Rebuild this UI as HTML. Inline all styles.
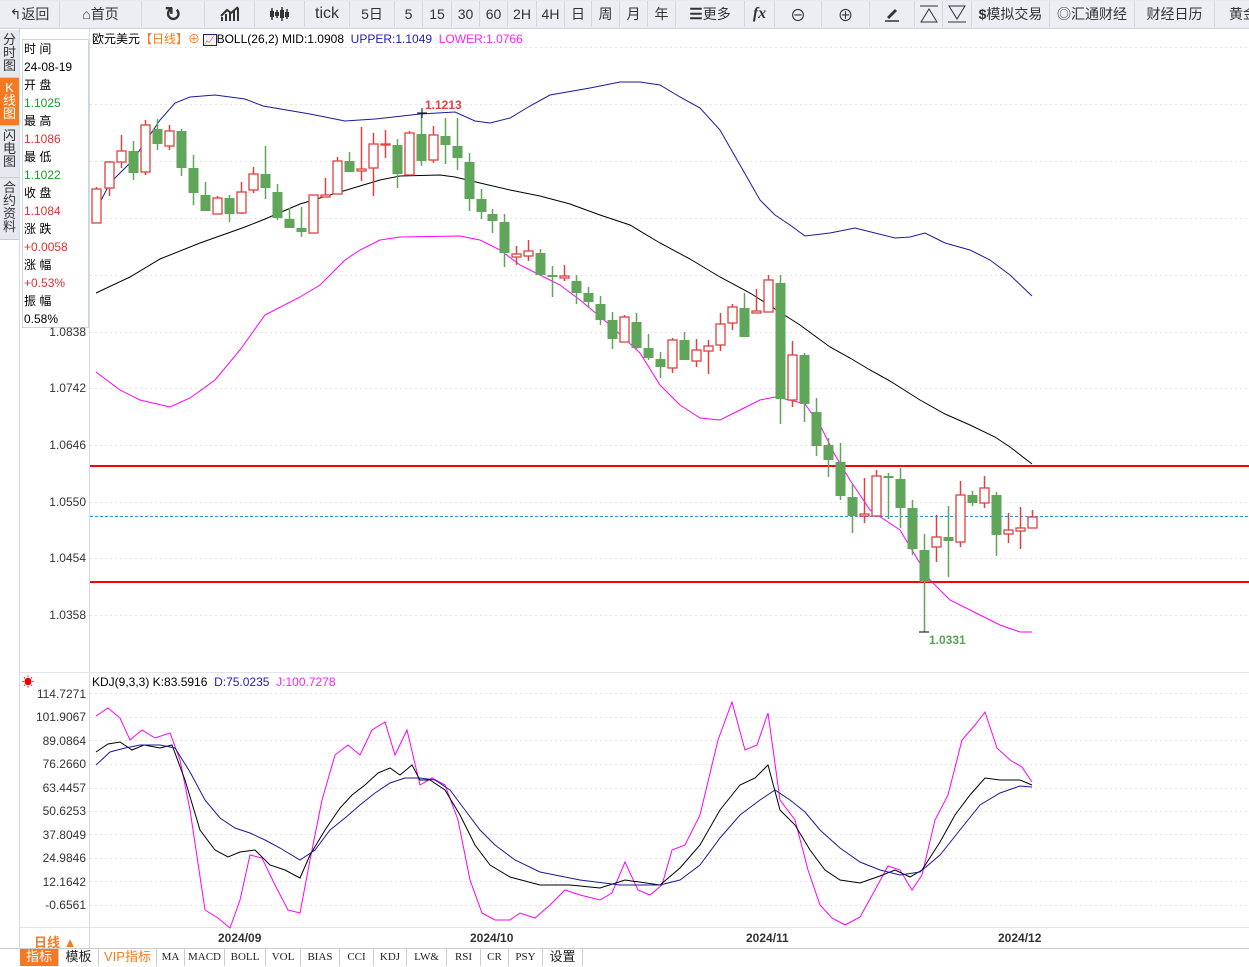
<!DOCTYPE html>
<html><head><meta charset="utf-8">
<style>
*{margin:0;padding:0;box-sizing:border-box}
body{width:1249px;height:967px;overflow:hidden;background:#fff;font-family:"Liberation Sans","Noto Sans CJK SC",sans-serif;position:relative}
#tb{position:absolute;left:0;top:0;width:1249px;height:29px;background:#e6e9f0;border-bottom:1px solid #d0d4dc}
.b{position:absolute;top:1px;height:26px;border-right:1px solid #d4d7de;background:#eceef4;font-size:14px;color:#333;display:flex;align-items:center;justify-content:center;white-space:nowrap}
#tabs{position:absolute;left:0;top:30px;width:19px;height:210px}
.t{width:19px;background:#e6e9f0;color:#333;font-size:13px;line-height:13px;text-align:center;padding-top:3px;border-bottom:1px solid #ccc}
#info{position:absolute;left:22px;top:39px;width:67px;height:289px;border:1px solid #cfd3da;background:#fff;font-size:12px;line-height:18px;padding-left:1px}
.g{color:#1a9a2a}.r{color:#e03030}
.yl{position:absolute;font-size:12px;color:#333;text-align:right;width:66px;left:20px}
#bot{position:absolute;left:0;top:948px;height:17px;font-size:12px;border-top:1px solid #ccc;width:1249px}
#bot div{position:absolute;top:0;height:17px;border-right:1px solid #ccc;text-align:center;line-height:16px;font-family:"Liberation Serif","Noto Serif CJK SC",serif;font-size:11px;color:#222}
#bot div.c{font-family:"Liberation Sans","Noto Sans CJK SC",sans-serif;font-size:13px}
</style></head><body>
<div id="tb">
<div class="b" style="left:0;width:60px">↰返回</div>
<div class="b" style="left:60px;width:82px">⌂首页</div>
<div class="b" style="left:142px;width:63px;font-size:20px;font-weight:bold">↻</div>
<div class="b" style="left:205px;width:50px"><svg width="20" height="16"><path d="M2 15V11M6 15V8M10 15V6M14 15V4M18 15V2M1 10L7 4L11 7L18 1" stroke="#333" stroke-width="2" fill="none"/></svg></div>
<div class="b" style="left:255px;width:50px"><svg width="22" height="16"><path d="M3 2V14M8 4V12M13 1V15M18 3V13" stroke="#333" stroke-width="1.5"/><rect x="1" y="5" width="4" height="6" fill="#333"/><rect x="6" y="6" width="4" height="4" fill="#333"/><rect x="11" y="4" width="4" height="8" fill="#333"/><rect x="16" y="6" width="4" height="5" fill="#333"/></svg></div>
<div class="b" style="left:305px;width:45px;font-size:16px">tick</div>
<div class="b" style="left:350px;width:45px">5日</div>
<div class="b" style="left:395px;width:28px">5</div>
<div class="b" style="left:423px;width:29px">15</div>
<div class="b" style="left:452px;width:28px">30</div>
<div class="b" style="left:480px;width:28px">60</div>
<div class="b" style="left:508px;width:29px">2H</div>
<div class="b" style="left:537px;width:28px">4H</div>
<div class="b" style="left:565px;width:27px">日</div>
<div class="b" style="left:592px;width:28px">周</div>
<div class="b" style="left:620px;width:28px">月</div>
<div class="b" style="left:648px;width:28px">年</div>
<div class="b" style="left:676px;width:69px"><b style="font-size:15px">☰</b>更多</div>
<div class="b" style="left:745px;width:30px;font-family:'Liberation Serif',serif;font-style:italic;font-weight:bold;font-size:16px">fx</div>
<div class="b" style="left:775px;width:47px;font-size:16px">⊖</div>
<div class="b" style="left:822px;width:48px;font-size:16px">⊕</div>
<div class="b" style="left:870px;width:45px"><svg width="16" height="16"><path d="M3 11L11 3L13 5L5 13Z" fill="#333"/><path d="M1 15H15" stroke="#333" stroke-width="1.5"/></svg></div>
<div class="b" style="left:915px;width:28px"><svg width="20" height="18"><path d="M1 1H19M2 17L10 4L18 17Z" stroke="#333" fill="none"/></svg></div>
<div class="b" style="left:943px;width:29px"><svg width="20" height="18"><path d="M1 17H19M2 1L10 14L18 1Z" stroke="#333" fill="none"/></svg></div>
<div class="b" style="left:972px;width:78px"><b>$</b>模拟交易</div>
<div class="b" style="left:1050px;width:85px">◎汇通财经</div>
<div class="b" style="left:1135px;width:80px">财经日历</div>
<div class="b" style="left:1215px;width:40px;justify-content:flex-start;padding-left:14px">黄金</div>
</div>
<div id="tabs">
<div class="t" style="height:48px">分<br>时<br>图</div>
<div class="t" style="height:48px;background:#f47920;color:#fff">K<br>线<br>图</div>
<div class="t" style="height:52px">闪<br>电<br>图</div>
<div class="t" style="height:62px">合<br>约<br>资<br>料</div>
</div>
<div style="position:absolute;left:19px;top:29px;width:1px;height:920px;background:#d8dbe0"></div>
<div id="info">时 间<br>24-08-19<br>开 盘<br><span class="g">1.1025</span><br>最 高<br><span class="r">1.1086</span><br>最 低<br><span class="g">1.1022</span><br>收 盘<br><span class="r">1.1084</span><br>涨 跌<br><span class="r">+0.0058</span><br>涨 幅<br><span class="r">+0.53%</span><br>振 幅<br>0.58%</div>
<div style="position:absolute;left:92px;top:30px;font-size:12px;white-space:nowrap">欧元美元<span style="color:#f47920">【日线】⊕</span> <span style="border:1px solid #226;font-size:9px">📈</span>BOLL(26,2) MID:1.0908 &nbsp;<span style="color:#2020c0">UPPER:1.1049</span> &nbsp;<span style="color:#ff20ff">LOWER:1.0766</span></div>
<div class="yl" style="top:325px">1.0838</div>
<div class="yl" style="top:381px">1.0742</div>
<div class="yl" style="top:438px">1.0646</div>
<div class="yl" style="top:495px">1.0550</div>
<div class="yl" style="top:551px">1.0454</div>
<div class="yl" style="top:608px">1.0358</div>
<div style="position:absolute;left:22px;top:673px;color:#e00;font-size:12px">☀</div>
<div style="position:absolute;left:92px;top:675px;font-size:12px;white-space:nowrap">KDJ(9,3,3) K:83.5916 &nbsp;<span style="color:#2020c0">D:75.0235</span> &nbsp;<span style="color:#ff20ff">J:100.7278</span></div>
<div class="yl" style="top:687px">114.7271</div>
<div class="yl" style="top:710px">101.9067</div>
<div class="yl" style="top:734px">89.0864</div>
<div class="yl" style="top:757px">76.2660</div>
<div class="yl" style="top:781px">63.4457</div>
<div class="yl" style="top:804px">50.6253</div>
<div class="yl" style="top:828px">37.8049</div>
<div class="yl" style="top:851px">24.9846</div>
<div class="yl" style="top:875px">12.1642</div>
<div class="yl" style="top:898px">-0.6561</div>
<div style="position:absolute;left:34px;top:932px;color:#f47920;font-size:13px;font-weight:bold">日线 ▲</div>
<div style="position:absolute;left:218px;top:931px;font-size:12px;font-weight:bold;color:#333">2024/09</div>
<div style="position:absolute;left:470px;top:931px;font-size:12px;font-weight:bold;color:#333">2024/10</div>
<div style="position:absolute;left:746px;top:931px;font-size:12px;font-weight:bold;color:#333">2024/11</div>
<div style="position:absolute;left:998px;top:931px;font-size:12px;font-weight:bold;color:#333">2024/12</div>
<svg id="ch" width="1249" height="967" style="position:absolute;left:0;top:0">
<line x1="89.5" y1="29" x2="89.5" y2="948" stroke="#d8dbe0"/>
<line x1="20" y1="672.5" x2="1249" y2="672.5" stroke="#e2e5ea"/>
<line x1="20" y1="927.5" x2="1249" y2="927.5" stroke="#e2e5ea"/>
<g id="grid" stroke="#e4e4e4" stroke-dasharray="2,3"></g>
<line x1="90" y1="466" x2="1249" y2="466" stroke="#f00" stroke-width="2"/>
<line x1="90" y1="582" x2="1249" y2="582" stroke="#f00" stroke-width="2"/>
<line x1="90" y1="516.5" x2="1249" y2="516.5" stroke="#2a8cf0" stroke-dasharray="3,2"/>
<g id="lines" fill="none"></g>
<g id="cd"></g>
<text x="425" y="109" fill="#e04040" font-size="12" font-weight="bold" font-family="Liberation Sans">1.1213</text>
<text x="929" y="644" fill="#5a9e5a" font-size="12" font-weight="bold" font-family="Liberation Sans">1.0331</text>
</svg>
<div id="bot">
<div class="c" style="left:20px;width:39px;background:#f47920;color:#fff">指标</div>
<div class="c" style="left:59px;width:40px">模板</div>
<div class="c" style="left:99px;width:58px;color:#f47920">VIP指标</div>
<div style="left:157px;width:28px">MA</div>
<div style="left:185px;width:40px">MACD</div>
<div style="left:225px;width:41px">BOLL</div>
<div style="left:266px;width:35px">VOL</div>
<div style="left:301px;width:39px">BIAS</div>
<div style="left:340px;width:34px">CCI</div>
<div style="left:374px;width:33px">KDJ</div>
<div style="left:407px;width:40px">LW&amp;</div>
<div style="left:447px;width:34px">RSI</div>
<div style="left:481px;width:28px">CR</div>
<div style="left:509px;width:34px">PSY</div>
<div class="c" style="left:543px;width:40px">设置</div>
</div>
<script>
var NS="http://www.w3.org/2000/svg";
function el(p,t,a){var e=document.createElementNS(NS,t);for(var k in a)e.setAttribute(k,a[k]);p.appendChild(e);return e}
var gr=document.getElementById('grid');
[47,104,161,218,275,332,388,445,502,558,615,693,717,740,764,788,811,834,858,881,905].forEach(function(y){el(gr,'line',{x1:90,x2:1249,y1:y+.5,y2:y+.5})});
var L=document.getElementById('lines');
function pl(pts,c){el(L,'polyline',{points:pts.map(function(p){return p.join(',')}).join(' '),stroke:c,'stroke-width':1})}
pl([[96,210],[110,183],[133,160],[160,120],[175,103],[190,97],[215,95],[245,99],[263,106],[310,114],[345,121],[375,119],[420,114],[455,112],[475,121],[490,123],[510,118],[530,106],[550,95],[590,88],[620,82],[640,82],[660,85],[680,97],[700,108],[720,130],[740,165],[760,200],[775,215],[790,225],[805,236],[830,233],[855,228],[875,233],[895,238],[910,237],[925,233],[945,243],[970,250],[990,260],[1010,275],[1032,296]],'#1a1a9a');
pl([[96,293],[130,277],[160,259],[200,243],[245,227],[265,219],[300,204],[330,195],[360,186],[380,180],[400,176],[440,175],[455,177],[480,183],[510,190],[540,196],[570,204],[600,215],[630,225],[660,243],[690,259],[720,277],[750,293],[775,309],[800,325],[830,347],[850,358],[870,370],[890,381],[920,400],[945,414],[970,425],[995,437],[1010,447],[1032,464]],'#000');
pl([[96,372],[120,390],[140,400],[170,407],[190,398],[215,380],[240,350],[265,315],[300,297],[320,285],[345,260],[360,250],[380,240],[400,237],[460,236],[480,240],[500,250],[520,265],[540,275],[560,285],[580,300],[610,325],[640,353],[660,385],[680,405],[700,418],[720,420],[740,410],[760,400],[775,397],[790,400],[805,404],[820,425],[835,455],[850,480],[870,510],[900,530],[915,555],[930,580],[950,600],[980,615],[1000,625],[1020,632],[1032,632]],'#ff00ff');
pl([[96,716],[108,708],[120,718],[130,740],[142,730],[155,738],[170,733],[180,760],[190,810],[205,910],[218,918],[230,928],[240,900],[250,855],[262,858],[275,885],[288,910],[300,913],[310,860],[322,800],[335,755],[348,745],[360,755],[372,730],[385,722],[395,755],[407,730],[420,785],[432,778],[445,785],[458,820],[470,880],[482,913],[495,920],[510,920],[520,913],[535,918],[550,905],[565,890],[580,895],[600,900],[612,893],[625,862],[638,890],[650,895],[662,885],[672,850],[685,845],[700,815],[718,740],[732,702],[745,750],[757,745],[768,713],[780,800],[795,820],[808,870],[820,905],[832,918],[845,925],[860,917],[875,890],[888,866],[900,870],[912,890],[922,875],[935,820],[948,795],[962,740],[975,725],[985,712],[997,748],[1010,760],[1022,767],[1032,782]],'#ff00ff');
pl([[96,752],[108,744],[120,742],[132,750],[144,745],[160,748],[172,745],[185,780],[200,830],[215,850],[228,857],[240,852],[255,850],[270,865],[285,870],[300,878],[310,855],[325,830],[340,808],[352,795],[365,785],[378,773],[390,768],[400,775],[412,765],[420,780],[430,780],[445,790],[460,815],[475,845],[490,865],[510,877],[540,885],[570,885],[600,888],[625,880],[660,885],[680,868],[700,845],[720,810],[740,785],[755,778],[768,765],[780,810],[795,825],[810,850],[825,870],[840,880],[860,883],[880,876],[895,870],[910,877],[922,870],[940,842],[955,815],[970,795],[985,778],[1000,780],[1020,780],[1032,785]],'#000');
pl([[96,765],[110,752],[125,748],[140,745],[160,745],[175,748],[190,772],[205,800],[220,818],[235,828],[250,833],[265,840],[280,848],[300,860],[315,850],[330,830],[345,818],[360,805],[375,793],[390,783],[405,778],[420,778],[435,780],[450,790],[465,810],[480,830],[495,845],[515,860],[540,872],[580,880],[620,885],[660,885],[680,880],[700,865],[720,838],[740,815],[760,800],[775,790],[790,800],[805,812],[820,830],[840,848],[860,862],[880,870],[900,875],[920,872],[940,855],[960,830],[980,805],[1000,793],[1020,786],[1032,787]],'#1a1a9a');
var C=[[96,189,223,187,223,1],[109,162,188,161,196,1],[121,151,162,135,168,1],[133,151,173,141,180,0],[145,125,172,120,175,1],[157,129,144,119,150,0],[169,131,146,125,150,1],[181,131,168,129,176,0],[193,168,193,155,205,0],[205,195,211,182,205,0],[217,198,214,196,214,1],[229,198,214,195,222,0],[241,192,213,182,214,1],[253,174,190,167,193,1],[265,174,188,146,199,0],[277,192,218,184,220,0],[289,219,228,208,228,0],[301,228,232,207,237,0],[313,195,233,195,233,1],[325,195,197,178,197,1],[337,161,194,157,194,1],[349,161,172,152,172,0],[361,169,171,127,181,1],[373,144,168,133,196,1],[385,144,145,130,158,1],[397,145,174,139,188,0],[409,133,175,131,175,1],[421,134,161,113,166,0],[433,135,160,126,163,1],[445,136,145,118,164,0],[457,146,158,118,170,0],[469,162,199,153,211,0],[481,199,212,189,219,0],[492,214,221,209,233,0],[504,222,253,214,267,0],[516,254,257,246,265,1],[528,251,256,240,261,1],[540,253,275,249,276,0],[552,275,277,266,297,0],[564,276,278,265,281,1],[576,281,293,275,304,0],[588,293,302,287,308,0],[600,304,320,296,325,0],[612,320,339,312,349,0],[624,317,342,315,342,1],[636,322,348,313,350,0],[648,348,358,334,360,0],[660,359,367,352,378,0],[672,340,368,338,373,1],[684,340,360,332,360,0],[696,350,361,339,367,1],[708,346,351,340,374,1],[720,324,345,313,351,1],[732,307,323,304,330,1],[744,308,337,293,337,0],[756,311,313,289,313,1],[768,280,312,275,312,1],[780,283,399,275,424,0],[792,355,400,341,407,1],[804,355,404,353,422,0],[816,412,446,398,456,0],[828,445,460,438,477,0],[840,462,496,443,500,0],[852,497,516,484,533,0],[864,514,516,478,523,1],[876,476,516,470,516,1],[888,476,478,473,519,0],[900,479,508,468,528,0],[912,508,549,500,555,0],[924,550,582,534,632,0],[936,537,547,515,562,1],[948,537,541,506,577,0],[960,495,542,481,547,1],[972,495,503,491,506,0],[984,488,503,476,508,1],[996,495,535,492,556,0],[1008,530,534,513,543,1],[1020,528,531,507,549,1],[1032,517,528,510,528,1]];
var G=document.getElementById('cd');
C.forEach(function(c){var x=c[0],col=c[5]?'#e04040':'#5fa55a';
el(G,'line',{x1:x+.5,x2:x+.5,y1:c[3],y2:c[4],stroke:col,'stroke-width':1.5});
var h=Math.max(c[2]-c[1],1);
if(c[5])el(G,'rect',{x:x-4,y:c[1],width:9,height:h,fill:'#fff',stroke:col,'stroke-width':1.3});
else el(G,'rect',{x:x-4.5,y:c[1],width:10,height:h,fill:col});});
el(G,'path',{d:'M417 113H427M422 108V118',stroke:'#000'});
el(G,'path',{d:'M919 632H929',stroke:'#000'});
</script>
</body></html>
